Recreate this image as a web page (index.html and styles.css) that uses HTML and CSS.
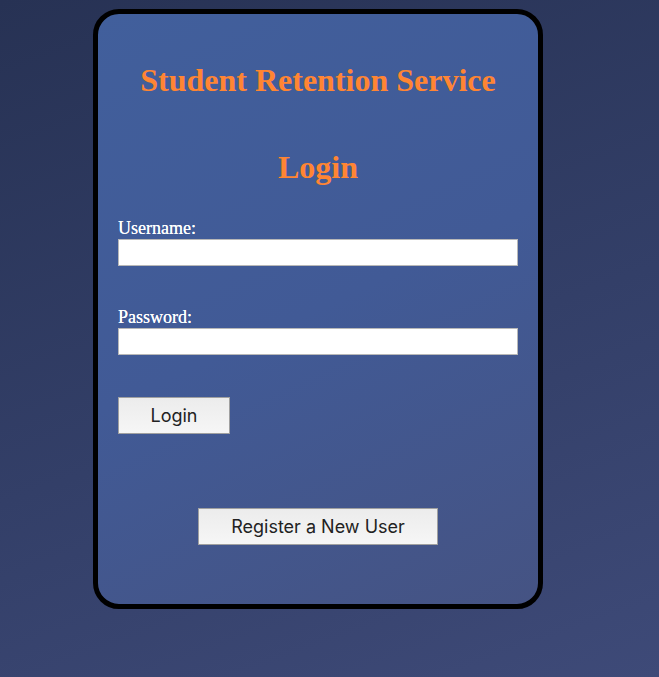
FILE: index.html
```html
<!DOCTYPE html>
<html>
<head>
<meta charset="utf-8">
<link rel="stylesheet" href="styles.css">
</head>
<body>
<div class="card">
  <h1 class="title">Student Retention Service</h1>
  <h2 class="subtitle">Login</h2>
  <form class="form">
    <label class="label" for="u">Username:</label>
    <input class="field" id="u" type="text">
    <label class="label label-pw" for="p">Password:</label>
    <input class="field" id="p" type="password">
    <button class="btn btn-login" type="button">Login</button>
  </form>
  <div class="register">
    <button class="btn btn-register" type="button">Register a New User</button>
  </div>
</div>
</body>
</html>
```
FILE: styles.css
```css
html, body {
  margin: 0;
  height: 100%;
}
body {
  background: linear-gradient(160deg, #273254 0%, #333f68 55%, #3e4a78 100%);
  font-family: "Liberation Serif", "Times New Roman", serif;
  padding-top: 9px;
  box-sizing: border-box;
}
.card {
  margin-left: 93px;
  width: 450px;
  height: 600px;
  box-sizing: border-box;
  border: 5px solid #000;
  border-radius: 26px;
  background: linear-gradient(155deg, #415f9c 0%, #415a96 50%, #455383 100%);
  padding: 0 20px;
}
.title {
  margin: 48px 0 0;
  text-align: center;
  color: #ff8533;
  font-size: 32px;
  font-weight: bold;
  line-height: 36px;
}
.subtitle {
  margin: 51px 0 0;
  text-align: center;
  color: #ff8533;
  font-size: 32px;
  font-weight: bold;
  line-height: 36px;
}
.form {
  display: flex;
  flex-direction: column;
  align-items: flex-start;
  margin-top: 33px;
}
.label {
  color: #fff;
  font-size: 18px;
  line-height: 20px;
  text-shadow: 0 0 0.4px #fff;
}
.label-pw {
  margin-top: 41px;
}
.field {
  width: 400px;
  height: 27px;
  box-sizing: border-box;
  border: 1px solid #b8b8b8;
  background: #fff;
  margin: 1px 0 0;
  padding: 0 4px;
}
.btn {
  font-family: "Inter", "Liberation Sans", sans-serif;
  font-size: 18px;
  color: #222;
  background: linear-gradient(#ececec, #f6f6f6);
  border: 1px solid #a0a0a0;
  height: 37px;
  padding: 0;
}
.btn-login {
  width: 112px;
  margin-top: 42px;
}
.register {
  display: flex;
  justify-content: center;
  margin-top: 74px;
}
.btn-register {
  width: 240px;
}
```
